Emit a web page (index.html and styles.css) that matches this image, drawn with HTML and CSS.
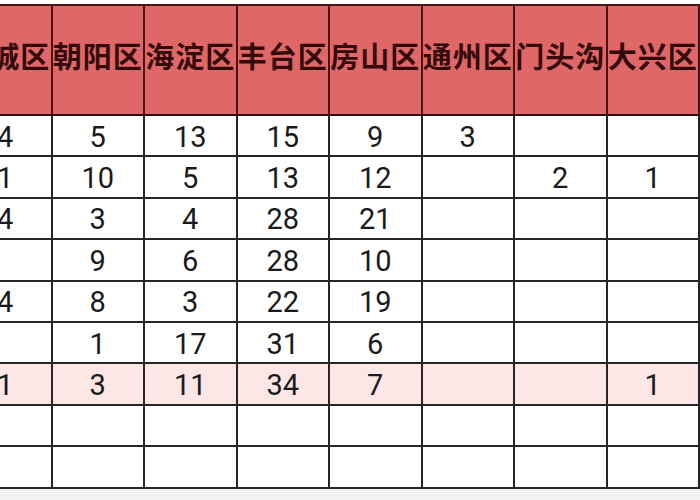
FILE: index.html
```html
<!DOCTYPE html>
<html lang="zh">
<head>
<meta charset="utf-8">
<link rel="stylesheet" href="styles.css">
</head>
<body>
<div class="page">
  <div class="sheet">
    <table class="grid">
      <thead>
        <tr>
          <th>西城区</th><th>朝阳区</th><th>海淀区</th><th>丰台区</th><th>房山区</th><th>通州区</th><th>门头沟</th><th>大兴区</th>
        </tr>
      </thead>
      <tbody>
        <tr><td>4</td><td>5</td><td>13</td><td>15</td><td>9</td><td>3</td><td></td><td></td></tr>
        <tr><td>1</td><td>10</td><td>5</td><td>13</td><td>12</td><td></td><td>2</td><td>1</td></tr>
        <tr><td>4</td><td>3</td><td>4</td><td>28</td><td>21</td><td></td><td></td><td></td></tr>
        <tr><td></td><td>9</td><td>6</td><td>28</td><td>10</td><td></td><td></td><td></td></tr>
        <tr><td>4</td><td>8</td><td>3</td><td>22</td><td>19</td><td></td><td></td><td></td></tr>
        <tr><td></td><td>1</td><td>17</td><td>31</td><td>6</td><td></td><td></td><td></td></tr>
        <tr class="hl"><td>1</td><td>3</td><td>11</td><td>34</td><td>7</td><td></td><td></td><td>1</td></tr>
        <tr><td></td><td></td><td></td><td></td><td></td><td></td><td></td><td></td></tr>
        <tr><td></td><td></td><td></td><td></td><td></td><td></td><td></td><td></td></tr>
      </tbody>
    </table>
  </div>
</div>
</body>
</html>
```
FILE: styles.css
```css
html, body {
  margin: 0;
  padding: 0;
  width: 700px;
  height: 500px;
  overflow: hidden;
  background: #f1f2f2;
}
.page {
  width: 700px;
  overflow: hidden;
  background: #ffffff;
  padding-top: 4px;
}
.sheet {
  margin-left: -42px;
  width: 742px;
}
.grid {
  table-layout: fixed;
  border-collapse: collapse;
  width: 742px;
}
.grid th {
  background: #e06767;
  color: #340a0a;
  font-family: "Noto Sans CJK SC", "Noto Sans", sans-serif;
  font-weight: 700;
  font-size: 29px;
  letter-spacing: 1px;
  height: 98px;
  padding: 0 0 10px 0;
  border: 2px solid #4a1414;
  border-bottom-color: #2a1010;
  white-space: nowrap;
  overflow: hidden;
  text-align: center;
  vertical-align: middle;
}
.grid td {
  font-family: Roboto, "Noto Sans", sans-serif;
  font-size: 29px;
  color: #1a1a1a;
  height: 36.4px;
  padding: 3px 0 0 0;
  border: 2px solid #262626;
  text-align: center;
  vertical-align: middle;
  background: #ffffff;
  line-height: 1;
}
.grid tr.hl td {
  background: #fde6e6;
}
```
